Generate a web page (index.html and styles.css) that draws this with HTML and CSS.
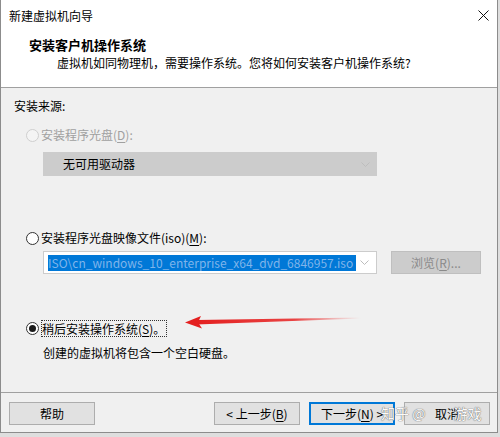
FILE: index.html
```html
<!DOCTYPE html>
<html lang="zh-CN">
<head>
    <meta charset="UTF-8">
    <title>新建虚拟机向导</title>
    <link rel="stylesheet" href="styles.css">
</head>
<body>

<div class="wizard">
    <div class="top">
        <div class="titlebar">
            <span>新建虚拟机向导</span>
            <svg class="close" width="11" height="11" viewBox="0 0 11 11">
                <path d="M0.5 0.5 L10.5 10.5 M10.5 0.5 L0.5 10.5" stroke="#111" stroke-width="1" fill="none"/>
            </svg>
        </div>
        <div class="header">
            <div class="header-title">安装客户机操作系统</div>
            <div class="header-sub">虚拟机如同物理机，需要操作系统。您将如何安装客户机操作系统?</div>
        </div>
    </div>

    <div class="content">
        <div class="group-label">安装来源:</div>

        <div class="option option-disc disabled">
            <span class="radio"></span>
            <span class="label">安装程序光盘(<u>D</u>):</span>
        </div>
        <div class="combo combo-disabled">
            <span class="combo-text">无可用驱动器</span>
            <svg class="chevron" width="9" height="5" viewBox="0 0 9 5">
                <path d="M0.5 0.5 L4.5 4.5 L8.5 0.5" stroke="#bdbdbd" fill="none"/>
            </svg>
        </div>

        <div class="option option-iso">
            <span class="radio"></span>
            <span class="label">安装程序光盘映像文件(iso)(<u>M</u>):</span>
        </div>
        <div class="iso-row">
            <div class="combo combo-iso">
                <span class="selection">ISO\cn_windows_10_enterprise_x64_dvd_6846957.iso</span>
                <svg class="chevron" width="9" height="5" viewBox="0 0 9 5">
                    <path d="M0.5 0.5 L4.5 4.5 L8.5 0.5" stroke="#bdbdbd" fill="none"/>
                </svg>
            </div>
            <button class="btn btn-browse">浏览(<u>R</u>)...</button>
        </div>

        <div class="option option-later">
            <span class="radio checked"></span>
            <span class="label focus">稍后安装操作系统(<u>S</u>)。</span>
        </div>
        <div class="hint">创建的虚拟机将包含一个空白硬盘。</div>

        <!-- annotation arrow drawn over the dialog -->
        <svg class="arrow" width="185" height="24" viewBox="0 0 185 24">
            <defs>
                <linearGradient id="fade" x1="0" y1="0" x2="1" y2="0">
                    <stop offset="0" stop-color="#e42020"/>
                    <stop offset="0.6" stop-color="#e83030" stop-opacity="0.9"/>
                    <stop offset="1" stop-color="#f06060" stop-opacity="0"/>
                </linearGradient>
            </defs>
            <path d="M16 10 L181 7.4 L181 8.6 L16 14.5 Z" fill="url(#fade)"/>
            <path d="M5 12.5 L21 6 L18 12.2 L22 18.5 Z" fill="#e42020"/>
        </svg>
    </div>

    <div class="footer">
        <button class="btn">帮助</button>
        <div class="nav">
            <button class="btn">&lt; 上一步(<u>B</u>)</button>
            <button class="btn btn-default">下一步(<u>N</u>) &gt;</button>
            <button class="btn">取消</button>
        </div>
        <div class="watermark">知乎 @<span class="skip">取消</span>游戏</div>
    </div>
</div>

</body>
</html>
```

FILE: styles.css
```css
body {
    margin: 0;
    padding: 0;
    background-color: #dedede;
    font-family: "Noto Sans CJK SC", "Liberation Sans", sans-serif;
    font-size: 12px;
    color: #000;
}

.wizard {
    width: 498px;
    height: 433px;
    box-sizing: border-box;
    border: 1px solid #8c8c8c;
    border-top: none;
    display: flex;
    flex-direction: column;
    background-color: #f0f0f0;
}

.top {
    height: 87px;
    background-color: #fff;
    border-bottom: 1px solid #a0a0a0;
}

.titlebar {
    height: 32px;
    padding: 0 8px 0 8px;
    display: flex;
    justify-content: space-between;
    align-items: center;
    line-height: 18px;
}

.close {
    display: block;
    margin-top: -1px;
}

.header {
    padding: 4px 0 0 28px;
}

.header-title {
    font-size: 13px;
    font-weight: bold;
    line-height: 18px;
}

.header-sub {
    padding-left: 28px;
    line-height: 18px;
}

.content {
    position: relative;
    padding: 9px 0 0 13px;
    box-sizing: border-box;
    height: 305px;
    border-bottom: 1px solid #a0a0a0;
}

.group-label {
    line-height: 18px;
}

.option {
    display: flex;
    align-items: center;
    height: 18px;
    line-height: 18px;
    padding-left: 12px;
}

.option-disc {
    margin-top: 11px;
}

.option-iso {
    margin-top: 53px;
}

.option-later {
    margin-top: 45px;
}

.disabled {
    color: #a0a0a0;
}

.radio {
    width: 13px;
    height: 13px;
    box-sizing: border-box;
    border: 1px solid #333;
    border-radius: 50%;
    background-color: #fff;
    margin-right: 2px;
    display: flex;
    justify-content: center;
    align-items: center;
}

.disabled .radio {
    border-color: #cfcfcf;
    background-color: #f4f4f4;
}

.radio.checked::after {
    content: "";
    width: 7px;
    height: 7px;
    border-radius: 50%;
    background-color: #1a1a1a;
}

.label u,
.btn u {
    text-underline-offset: 2px;
}

.focus {
    border: 1px dotted #333;
    line-height: 15px;
    padding: 0 1px 0 0;
}

.combo {
    width: 334px;
    height: 24px;
    box-sizing: border-box;
    margin-left: 29px;
    display: flex;
    align-items: center;
    justify-content: space-between;
    overflow: hidden;
}

.combo-disabled {
    margin-top: 8px;
    background-color: #cccccc;
    padding: 0 7px 0 20px;
}

.combo-text {
    line-height: 18px;
}

.iso-row {
    display: flex;
    align-items: center;
    margin-top: 4px;
}

.combo-iso {
    height: 23px;
    background-color: #fff;
    border: 1px solid #cccccc;
    padding: 0 7px 0 4px;
}

.selection {
    width: 308px;
    height: 16px;
    line-height: 16px;
    background-color: #0078d7;
    color: #7fb4ea;
    white-space: nowrap;
    overflow: hidden;
}

.chevron {
    display: block;
    flex-shrink: 0;
}

.hint {
    margin-top: 7px;
    padding-left: 29px;
    line-height: 18px;
}

.arrow {
    position: absolute;
    left: 179px;
    top: 222px;
}

.btn {
    width: 86px;
    height: 23px;
    box-sizing: border-box;
    border: 1px solid #adadad;
    background-color: #e1e1e1;
    font-family: inherit;
    font-size: 12px;
    color: #000;
    padding: 0;
    line-height: 18px;
}

.btn-browse {
    width: 90px;
    margin-left: 14px;
    background-color: #cccccc;
    border-color: #bfbfbf;
    color: #8a8a8a;
}

.btn-default {
    border: 2px solid #0078d7;
}

.footer {
    position: relative;
    flex: 1;
    display: flex;
    align-items: flex-start;
    padding: 9px 7px 0 8px;
}

.nav {
    margin-left: auto;
    display: flex;
    gap: 9px;
}

.watermark {
    position: absolute;
    left: 380px;
    top: 10px;
    font-size: 14px;
    line-height: 20px;
    color: #fafafa;
    text-shadow: 0 0 1px #6a6a6a, 0 0 1px #6a6a6a;
    white-space: nowrap;
}

.watermark .skip {
    color: transparent;
    text-shadow: none;
}
```
